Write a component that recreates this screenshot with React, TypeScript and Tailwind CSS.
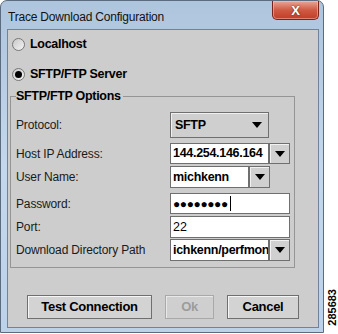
import React from 'react';

const font = { fontFamily: '"Liberation Sans", Arial, sans-serif' };

const Arrow: React.FC = () => (
  <svg width="10" height="6" viewBox="0 0 10 6" className="block">
    <path d="M0 0 H10 L5 6 Z" fill="#000" />
  </svg>
);

const Radio: React.FC<{ checked?: boolean; label: string }> = ({ checked, label }) => (
  <div className="flex h-[12px] items-center gap-[5px] pl-[4px]">
    <span className="flex h-[13px] w-[13px] items-center justify-center rounded-full border border-[#777] bg-gradient-to-br from-[#c8c8c8] to-[#f4f4f4]">
      {checked && <span className="h-[7px] w-[7px] rounded-full bg-black" />}
    </span>
    <span className="text-[12.5px] font-bold leading-none tracking-[-0.3px] text-black">{label}</span>
  </div>
);

const DropButton: React.FC = () => (
  <div className="flex w-[21px] items-center justify-center border border-[#6f6f6f] bg-[#d0d0d0] shadow-[inset_1px_1px_0_#f2f2f2]">
    <Arrow />
  </div>
);

const TextBox: React.FC<{ w: string; bold?: boolean; children: React.ReactNode }> = ({ w, bold, children }) => (
  <div
    className={`${w} flex items-center overflow-hidden whitespace-nowrap border border-[#6f6f6f] bg-white pl-[2px] text-[12.5px] leading-none text-black ${
      bold ? 'font-bold tracking-[-0.3px]' : ''
    }`}
  >
    {children}
  </div>
);

const Label: React.FC<{ children: React.ReactNode }> = ({ children }) => (
  <div className="flex items-center text-[12px] leading-none tracking-[-0.15px] text-[#1a1a1a]">{children}</div>
);

export default function App() {
  return (
    <div className="flex h-[334px] w-[338px] bg-white" style={font}>
      <div className="flex h-[333px] w-[324px] flex-col rounded-t-[7px] border border-[#5c6b7d] bg-gradient-to-b from-[#aec5de] via-[#c4d7ec] to-[#bcd2ea]">
        {/* title bar */}
        <div className="flex h-[28px] items-start justify-between">
          <div className="mt-[7px] pl-[7px] text-[12px] tracking-[-0.2px] text-[#111]">Trace Download Configuration</div>
          <div className="mr-[4px] flex h-[19px] w-[47px] items-center justify-center rounded-b-[5px] border border-t-0 border-[#7a2418] bg-gradient-to-b from-[#e9a597] via-[#cf5a43] to-[#c23c25] shadow-[inset_0_0_0_1px_rgba(255,200,190,0.5)]">
            <span className="text-[13px] font-bold leading-none text-white [text-shadow:0_0_2px_#5a1a10]">X</span>
          </div>
        </div>

        {/* content panel */}
        <div className="ml-[6px] flex h-[299px] w-[312px] flex-col border border-[#71839a] bg-[#cdcdcd]">
          <div className="mt-[8px]">
            <Radio label="Localhost" />
          </div>
          <div className="mt-[18px]">
            <Radio checked label="SFTP/FTP Server" />
          </div>

          <fieldset className="ml-[2px] mt-[9px] w-[285px] border border-[#959595] pb-[6px] pl-[5px]">
            <legend className="pr-[2px] text-[12.5px] font-bold leading-[14px] tracking-[-0.3px] text-black">
              SFTP/FTP Options
            </legend>

            <div className="mt-[9px] grid grid-cols-[154px_120px]">
              <Label>Protocol:</Label>
              <div className="flex h-[26px] w-[99px] items-center justify-between border border-[#6f6f6f] bg-[#cfcfcf] pl-[4px] pr-[6px] shadow-[inset_1px_1px_0_#f0f0f0]">
                <span className="text-[12.5px] font-bold tracking-[-0.3px] text-black">SFTP</span>
                <Arrow />
              </div>
            </div>

            <div className="mt-[5px] grid grid-cols-[154px_120px]">
              <Label>Host IP Address:</Label>
              <div className="flex h-[21px]">
                <TextBox w="w-[99px]" bold>
                  144.254.146.164
                </TextBox>
                <DropButton />
              </div>
            </div>

            <div className="mt-[2px] grid grid-cols-[154px_120px]">
              <Label>User Name:</Label>
              <div className="flex h-[22px]">
                <TextBox w="w-[79px]" bold>
                  michkenn
                </TextBox>
                <DropButton />
              </div>
            </div>

            <div className="mt-[5px] grid grid-cols-[154px_120px]">
              <Label>Password:</Label>
              <div className="flex h-[21px]">
                <TextBox w="w-[120px]" bold>
                  <span className="text-[12px] tracking-[-0.4px]">●●●●●●●●</span>
                  <span className="ml-[2px] h-[15px] w-[1px] bg-black" />
                </TextBox>
              </div>
            </div>

            <div className="mt-[2px] grid grid-cols-[154px_120px]">
              <Label>Port:</Label>
              <div className="flex h-[22px]">
                <TextBox w="w-[120px]">22</TextBox>
              </div>
            </div>

            <div className="mt-[1px] grid grid-cols-[154px_120px]">
              <Label>Download Directory Path</Label>
              <div className="flex h-[22px]">
                <TextBox w="w-[99px]" bold>
                  ichkenn/perfmon
                </TextBox>
                <DropButton />
              </div>
            </div>
          </fieldset>

          <div className="mt-[27px] flex justify-center gap-[13px]">
            <button className="h-[24px] w-[125px] border border-[#6f6f6f] bg-[#d3d3d3] text-[13px] font-bold tracking-[-0.3px] text-black shadow-[inset_1px_1px_0_#f6f6f6]">
              Test Connection
            </button>
            <button className="h-[24px] w-[49px] border border-[#a9a9a9] bg-[#cfcfcf] text-[13px] font-bold tracking-[-0.3px] text-[#9c9c9c] shadow-[inset_1px_1px_0_#e8e8e8]">
              Ok
            </button>
            <button className="h-[24px] w-[72px] border border-[#6f6f6f] bg-[#d3d3d3] text-[13px] font-bold tracking-[-0.3px] text-black shadow-[inset_1px_1px_0_#f6f6f6]">
              Cancel
            </button>
          </div>
        </div>
      </div>

      <div className="ml-[3px] flex items-end pb-[8px]">
        <span className="rotate-180 text-[11px] font-bold leading-none text-black [writing-mode:vertical-rl]">285683</span>
      </div>
    </div>
  );
}
